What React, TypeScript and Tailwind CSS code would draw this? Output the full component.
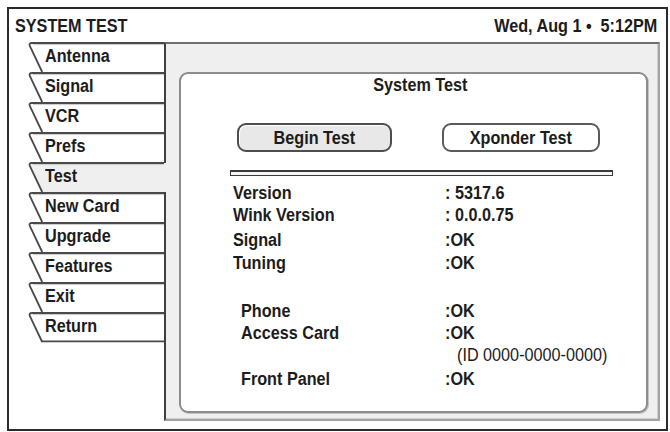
import React from "react";

type Tab = { label: string; selected?: boolean; last?: boolean };

const tabs: Tab[] = [
  { label: "Antenna" },
  { label: "Signal" },
  { label: "VCR" },
  { label: "Prefs" },
  { label: "Test", selected: true },
  { label: "New Card" },
  { label: "Upgrade" },
  { label: "Features" },
  { label: "Exit" },
  { label: "Return", last: true },
];

// Narrowed glyph run: the set-top UI font is a condensed grotesque.
function T({ children, origin = "origin-left" }: { children: React.ReactNode; origin?: string }) {
  return <span className={`inline-block scale-x-[0.9] whitespace-pre ${origin}`}>{children}</span>;
}

function MenuTab({ label, selected, last }: Tab) {
  const fill = selected ? "#efefef" : "#ffffff";
  const right = selected ? 158 : 155;
  return (
    <div className={selected ? "relative z-10 h-[30px]" : "relative h-[30px]"}>
      <svg
        className="absolute left-0 top-0 overflow-visible"
        width={155}
        height={30}
        viewBox="0 0 155 30"
      >
        <path d={`M${right} 1 H23 Q19.6 1 20.8 4 L33 30 H${right} Z`} fill={fill} />
        <path d="M155 1 H23 Q19.6 1 20.8 4 L33.2 30" fill="none" stroke="#4a4a4a" strokeWidth={1.8} />
        <path d="M155 2.6 H24" fill="none" stroke="#c9c9c9" strokeWidth={1} />
        {last && <path d="M33 29.4 H155" fill="none" stroke="#4a4a4a" strokeWidth={1.8} />}
      </svg>
      <div className="relative pl-[36px] leading-[28px]">
        <T>{label}</T>
      </div>
    </div>
  );
}

function InfoRow({
  label,
  value,
  indent,
  className,
}: {
  label: string;
  value: string;
  indent?: boolean;
  className?: string;
}) {
  return (
    <div className={`flex leading-[22px] ${className ?? ""}`}>
      <div className={indent ? "w-[212px] pl-[8px]" : "w-[212px]"}>
        <T>{label}</T>
      </div>
      <div>
        <T>{value}</T>
      </div>
    </div>
  );
}

export default function App() {
  return (
    <div className="w-[670px] h-[432px] bg-white pt-[7px] pl-[7px] font-['Liberation_Sans',Arial,Helvetica,sans-serif] text-[18px] font-bold text-[#1c1c1c]">
      <div className="w-[661px] h-[424px] border-2 border-[#2b2b2b] flex flex-col">
        {/* title bar */}
        <div className="h-[33px] flex justify-between pt-[7px] pl-[6px] pr-[9px] leading-[20px]">
          <T>SYSTEM TEST</T>
          <T origin="origin-right">{"Wed, Aug 1 •  5:12PM"}</T>
        </div>

        <div className="flex">
          {/* side menu */}
          <div className="w-[155px] shrink-0">
            {tabs.map((t) => (
              <MenuTab key={t.label} {...t} />
            ))}
          </div>

          {/* main panel */}
          <div className="w-[496px] h-[379px] bg-[#efefef] border-2 border-t-[#6e6e6e] border-l-[#3f3f3f] border-r-[#a3a3a3] border-b-[#a3a3a3] shadow-[inset_-1px_-1px_0_#d0d0d0] pl-[13px] pt-[28px]">
            <div className="w-[469px] h-[341px] bg-white rounded-[9px] border-2 border-[#8c8c8c] shadow-[1px_1px_0_#c4c4c4]">
              <div className="pt-[1px] leading-[20px] text-center pl-[13px]">
                <T origin="origin-center">System Test</T>
              </div>

              <div className="mt-[28px] flex pl-[56px] gap-[50px]">
                <div className="w-[155px] h-[29px] rounded-[9px] border-2 border-[#4d4d4d] bg-[#e8e8e8] shadow-[inset_1px_1px_0_#ffffff] flex items-center justify-center leading-[20px]">
                  <T origin="origin-center">Begin Test</T>
                </div>
                <div className="w-[158px] h-[29px] rounded-[9px] border-2 border-[#5a5a5a] bg-white flex items-center justify-center leading-[20px]">
                  <T origin="origin-center">Xponder Test</T>
                </div>
              </div>

              <div className="mt-[18px] ml-[49px] w-[383px] h-[6px] border-t-2 border-b border-x border-[#3a3a3a] bg-[#f6f6f6]" />

              <div className="mt-[6px] ml-[52px]">
                <InfoRow label="Version" value=": 5317.6" />
                <InfoRow label="Wink Version" value=": 0.0.0.75" />
                <InfoRow label="Signal" value=":OK" className="mt-[3px]" />
                <InfoRow label="Tuning" value=":OK" className="mt-[1px]" />
                <InfoRow label="Phone" value=":OK" indent className="mt-[26px]" />
                <InfoRow label="Access Card" value=":OK" indent />
                <div className="flex leading-[22px]">
                  <div className="w-[212px]" />
                  <div className="pl-[12px] font-normal">
                    <T>(ID 0000-0000-0000)</T>
                  </div>
                </div>
                <InfoRow label="Front Panel" value=":OK" indent className="mt-[2px]" />
              </div>
            </div>
          </div>
        </div>
      </div>
    </div>
  );
}
